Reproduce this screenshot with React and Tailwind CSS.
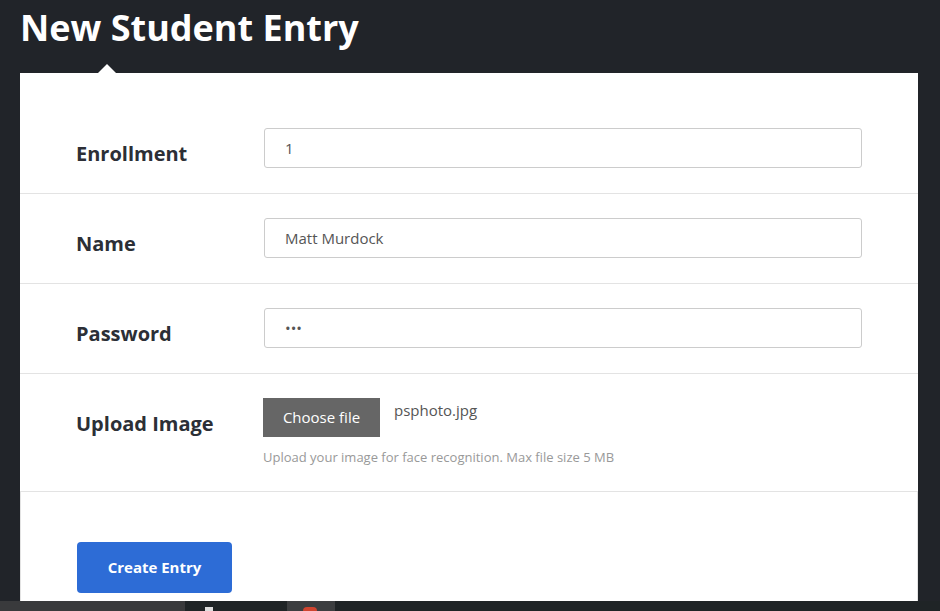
import React from 'react';

const font = { fontFamily: '"Open Sans", "Noto Sans", sans-serif' };

function Field({ label, children, first }) {
  return (
    <div className={`flex items-start border-b border-[#e3e3e3] ${first ? 'pt-[55px]' : 'pt-[24px]'} pb-[25px]`}>
      <label className="w-[244px] pl-[56px] pt-[12px] shrink-0 text-[20px] font-bold text-[#2c2f36] leading-[28px]">{label}</label>
      <div className="w-[598px]">{children}</div>
    </div>
  );
}

export default function App() {
  return (
    <div className="w-[940px] h-[611px] overflow-hidden bg-[#212429] flex flex-col" style={font}>
      {/* Page title */}
      <h1 className="px-[20px] pt-[3px] h-[73px] text-[36px] font-bold text-white leading-[50px] relative">
        New Student Entry
        <span className="absolute left-[98px] bottom-0 w-0 h-0 border-l-[9px] border-r-[9px] border-b-[9px] border-l-transparent border-r-transparent border-b-white"></span>
      </h1>

      {/* Card */}
      <div className="mx-[20px] w-[898px] h-[528px] bg-white flex flex-col">
        <Field label="Enrollment" first>
          <input readOnly value="1" className="w-full h-[40px] border border-[#cccccc] rounded-[3px] px-[20px] text-[15px] text-[#555]" style={font} />
        </Field>
        <Field label="Name">
          <input readOnly value="Matt Murdock" className="w-full h-[40px] border border-[#cccccc] rounded-[3px] px-[20px] text-[15px] text-[#555]" style={font} />
        </Field>
        <Field label="Password">
          <input readOnly type="password" value="abc" className="w-full h-[40px] border border-[#cccccc] rounded-[3px] px-[20px] text-[15px] text-[#555]" style={font} />
        </Field>
        <div className="flex items-start border-b border-[#e3e3e3] pt-[24px] h-[118px]">
          <label className="w-[244px] pl-[56px] pt-[12px] shrink-0 text-[20px] font-bold text-[#2c2f36] leading-[28px]">Upload Image</label>
          <div className="flex flex-col -ml-[1px]">
            <div className="flex items-start">
              <button className="w-[117px] h-[39px] bg-[#666666] text-white text-[15px]" style={font}>Choose file</button>
              <span className="ml-[14px] text-[15px] text-[#555] leading-[24px]">psphoto.jpg</span>
            </div>
            <p className="mt-[11px] text-[13px] text-[#999] leading-[18px]">Upload your image for face recognition. Max file size 5 MB</p>
          </div>
        </div>
        {/* Footer */}
        <div className="flex-1 border-x border-[#e3e3e3] pl-[56px] pt-[50px]">
          <button className="w-[155px] h-[51px] bg-[#2d6cd6] rounded-[4px] text-white text-[15px] font-bold" style={font}>Create Entry</button>
        </div>
      </div>

      {/* taskbar strip */}
      <div className="h-[10px] flex">
        <div className="w-[185px] bg-[#393a3c]"></div>
        <div className="w-[102px] bg-[#1f2426] relative">
          <span className="absolute left-[20px] top-[6px] w-[8px] h-[4px] bg-[#ddd]"></span>
        </div>
        <div className="w-[48px] bg-[#3c3e40] relative">
          <span className="absolute left-[16px] top-[6px] w-[14px] h-[8px] rounded-full bg-[#d0442f]"></span>
        </div>
        <div className="flex-1 bg-[#1f2426]"></div>
      </div>
    </div>
  );
}
